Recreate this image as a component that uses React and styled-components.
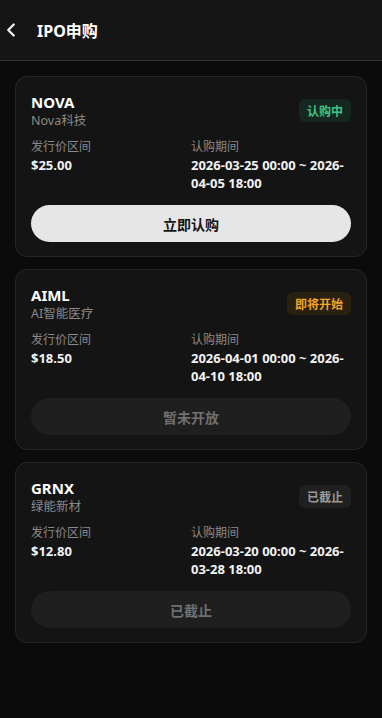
import React from 'react'
import styled, { createGlobalStyle } from 'styled-components'
import { ChevronLeft } from 'lucide-react'

const GlobalStyle = createGlobalStyle`
  * { box-sizing: border-box; }
  html, body {
    margin: 0;
    padding: 0;
    background: #0b0b0b;
    font-family: "Noto Sans", "Noto Sans CJK SC", sans-serif;
    color: #f2f2f2;
  }
`

const Page = styled.div`
  width: 382px;
  min-height: 718px;
  background: #0b0b0b;
`

const Header = styled.header`
  height: 61px;
  display: flex;
  align-items: center;
  gap: 15px;
  padding: 0;
  background: #151515;
  border-bottom: 1px solid #333;
  button {
    background: none;
    border: none;
    padding: 0;
    margin: 0;
    width: 22px;
    height: 22px;
    display: flex;
    align-items: center;
    justify-content: center;
    color: #f2f2f2;
  }
  h1 {
    margin: 0;
    font-size: 16px;
    font-weight: 700;
    color: #fff;
  }
`

const List = styled.div`
  padding: 15px 15px 16px;
  display: flex;
  flex-direction: column;
  gap: 12px;
`

const Card = styled.div`
  background: #141414;
  border: 1px solid #262626;
  border-radius: 12px;
  padding: 15px 15px 14px;
`

const Top = styled.div`
  display: flex;
  align-items: center;
  justify-content: space-between;
`

const Name = styled.div`
  h2 {
    margin: 0;
    font-size: 15px;
    line-height: 20px;
    font-weight: 700;
    color: #fff;
  }
  p {
    margin: 0;
    font-size: 12.5px;
    line-height: 17px;
    color: #8a8a8a;
  }
`

const badgeColors = {
  open: { bg: '#16271f', fg: '#3ec48a' },
  soon: { bg: '#2a2010', fg: '#f0a42a' },
  closed: { bg: '#202020', fg: '#9a9a9a' },
}

const Badge = styled.span`
  display: inline-flex;
  align-items: center;
  height: 23px;
  padding: 0 8px;
  border-radius: 6px;
  font-size: 12px;
  font-weight: 700;
  background: ${(p) => badgeColors[p.$kind].bg};
  color: ${(p) => badgeColors[p.$kind].fg};
`

const Info = styled.div`
  display: grid;
  grid-template-columns: 1fr 1fr;
  margin-top: 9px;
`

const Field = styled.div`
  span {
    display: block;
    font-size: 12px;
    line-height: 17px;
    color: #8a8a8a;
  }
  strong {
    display: block;
    margin-top: 1px;
    font-size: 13px;
    line-height: 18px;
    font-weight: 700;
    color: #f2f2f2;
  }
`

const Action = styled.button`
  display: block;
  width: 100%;
  height: 37px;
  margin-top: 13px;
  border: none;
  border-radius: 999px;
  font-family: inherit;
  font-size: 14px;
  font-weight: 700;
  background: ${(p) => (p.disabled ? '#1f1f1f' : '#e6e6e6')};
  color: ${(p) => (p.disabled ? '#6f6f6f' : '#141414')};
`

const items = [
  {
    code: 'NOVA',
    name: 'Nova科技',
    status: 'open',
    badge: '认购中',
    price: '$25.00',
    from: '2026-03-25 00:00 ~ 2026-',
    to: '04-05 18:00',
    action: '立即认购',
  },
  {
    code: 'AIML',
    name: 'AI智能医疗',
    status: 'soon',
    badge: '即将开始',
    price: '$18.50',
    from: '2026-04-01 00:00 ~ 2026-',
    to: '04-10 18:00',
    action: '暂未开放',
  },
  {
    code: 'GRNX',
    name: '绿能新材',
    status: 'closed',
    badge: '已截止',
    price: '$12.80',
    from: '2026-03-20 00:00 ~ 2026-',
    to: '03-28 18:00',
    action: '已截止',
  },
]

const App = () => {
  return (
    <Page>
      <GlobalStyle />
      <Header>
        <button>
          <ChevronLeft size={22} strokeWidth={2.5} />
        </button>
        <h1>IPO申购</h1>
      </Header>
      <List>
        {items.map((item) => (
          <Card key={item.code}>
            <Top>
              <Name>
                <h2>{item.code}</h2>
                <p>{item.name}</p>
              </Name>
              <Badge $kind={item.status}>{item.badge}</Badge>
            </Top>
            <Info>
              <Field>
                <span>发行价区间</span>
                <strong>{item.price}</strong>
              </Field>
              <Field>
                <span>认购期间</span>
                <strong>
                  {item.from}
                  <wbr />
                  {item.to}
                </strong>
              </Field>
            </Info>
            <Action disabled={item.status !== 'open'}>{item.action}</Action>
          </Card>
        ))}
      </List>
    </Page>
  )
}

export default App
